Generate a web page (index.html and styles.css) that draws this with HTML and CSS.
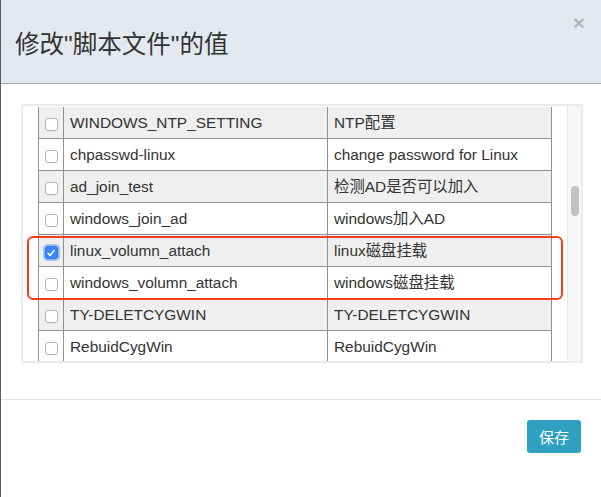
FILE: index.html
```html
<!DOCTYPE html>
<html lang="zh-CN">
<head>
<meta charset="utf-8">
<title>修改脚本文件的值</title>
<link rel="stylesheet" href="styles.css">
</head>
<body>
<div class="modal">
  <div class="modal-header">
    <h4 class="modal-title">修改"脚本文件"的值</h4>
    <span class="close">×</span>
  </div>
  <div class="modal-body">
    <div class="list-box">
      <div class="list-view">
        <div class="script-table">
          <div class="row odd"><div class="cell chk"><span class="cb"></span></div><div class="cell">WINDOWS_NTP_SETTING</div><div class="cell">NTP配置</div></div>
          <div class="row"><div class="cell chk"><span class="cb"></span></div><div class="cell">chpasswd-linux</div><div class="cell">change password for Linux</div></div>
          <div class="row odd"><div class="cell chk"><span class="cb"></span></div><div class="cell">ad_join_test</div><div class="cell">检测AD是否可以加入</div></div>
          <div class="row"><div class="cell chk"><span class="cb"></span></div><div class="cell">windows_join_ad</div><div class="cell">windows加入AD</div></div>
          <div class="row odd"><div class="cell chk"><span class="cb checked"><svg viewBox="0 0 12 12" width="12" height="12"><path d="M3 6.3 L5.1 8.4 L9 3.6" fill="none" stroke="#fff" stroke-width="1.6" stroke-linecap="round" stroke-linejoin="round"/></svg></span></div><div class="cell">linux_volumn_attach</div><div class="cell">linux磁盘挂载</div></div>
          <div class="row"><div class="cell chk"><span class="cb"></span></div><div class="cell">windows_volumn_attach</div><div class="cell">windows磁盘挂载</div></div>
          <div class="row odd"><div class="cell chk"><span class="cb"></span></div><div class="cell">TY-DELETCYGWIN</div><div class="cell">TY-DELETCYGWIN</div></div>
          <div class="row"><div class="cell chk"><span class="cb"></span></div><div class="cell">RebuidCygWin</div><div class="cell">RebuidCygWin</div></div>
          <div class="row odd"><div class="cell chk"></div><div class="cell"></div><div class="cell"></div></div>
        </div>
      </div>
      <div class="scroll-track"><div class="scroll-thumb"></div></div>
    </div>
    <div class="highlight"></div>
  </div>
  <div class="modal-footer">
    <button class="btn-save">保存</button>
  </div>
</div>
</body>
</html>
```

FILE: styles.css
```css
html, body {
  margin: 0;
  padding: 0;
  background: #fff;
}
body {
  font-family: "Liberation Sans", Arial, "Noto Sans CJK SC", sans-serif;
  color: #333;
}
.modal {
  width: 600px;
  height: 497px;
  border-left: 1px solid #5c5c5c;
  display: flex;
  flex-direction: column;
}
.modal-header {
  height: 76px;
  padding: 7px 16px 0 14px;
  background: #e4e9ef;
  border-bottom: 1px solid #a5a8ab;
  display: flex;
  align-items: center;
  justify-content: space-between;
}
.modal-title {
  margin: 0;
  font-family: "Liberation Sans", "Noto Sans CJK SC", sans-serif;
  font-size: 24.5px;
  font-weight: normal;
  line-height: 30px;
  color: #333;
}
.close {
  align-self: flex-start;
  margin-top: 5px;
  font-size: 21px;
  font-weight: bold;
  line-height: 1;
  color: #000;
  opacity: 0.22;
}
.modal-body {
  position: relative;
  padding: 20px 18px 36px 20px;
  border-bottom: 1px solid #e3e3e3;
}
.list-box {
  height: 255px;
  border: 2px solid #ebebeb;
  display: flex;
  background: #fff;
}
.list-view {
  flex: 1;
  overflow: hidden;
  padding: 1px 15px 0 15px;
}
.script-table {
  font-size: 15.4px;
  color: #333;
}
.row {
  display: grid;
  grid-template-columns: 25px 264px 1fr;
  height: 32px;
  box-sizing: border-box;
  border-bottom: 1px solid #8f8f8f;
  border-left: 1px solid #8f8f8f;
}
.row.odd {
  background: #efefef;
}
.cell {
  display: flex;
  align-items: center;
  padding: 1px 6px 0 6px;
  border-right: 1px solid #8f8f8f;
  white-space: nowrap;
  overflow: hidden;
  line-height: 18px;
}
.cell.chk {
  justify-content: center;
  padding: 4px 0 0 0;
}
.cb {
  display: block;
  box-sizing: border-box;
  width: 13px;
  height: 13px;
  border: 1px solid #b3b3b3;
  border-radius: 3px;
  background: #fff;
  position: relative;
}
.cb.checked {
  background: #3a86f6;
  border-color: #2f76e6;
  box-shadow: 0 0 0 2px rgba(92, 150, 245, 0.55);
}
.cb svg {
  position: absolute;
  left: -0.5px;
  top: -0.5px;
}
.scroll-track {
  width: 14px;
  background: #f6f6f6;
  border-left: 1px solid #e8e8e8;
  padding-top: 80px;
  box-sizing: border-box;
}
.scroll-thumb {
  width: 8px;
  height: 30px;
  margin-left: 3px;
  border-radius: 4px;
  background: #c2c2c2;
}
.highlight {
  position: absolute;
  left: 26px;
  top: 152px;
  width: 532px;
  height: 60px;
  border: 2.5px solid #f43f1d;
  border-radius: 6px;
}
.modal-footer {
  flex: 1;
  padding: 20px 20px 0 20px;
  display: flex;
  justify-content: flex-end;
  align-items: flex-start;
}
.btn-save {
  height: 33px;
  width: 54px;
  padding: 0;
  border: none;
  border-radius: 3px;
  background: #30a0c0;
  color: #fff;
  font-family: "Noto Sans CJK SC", sans-serif;
  font-size: 15px;
}
```
